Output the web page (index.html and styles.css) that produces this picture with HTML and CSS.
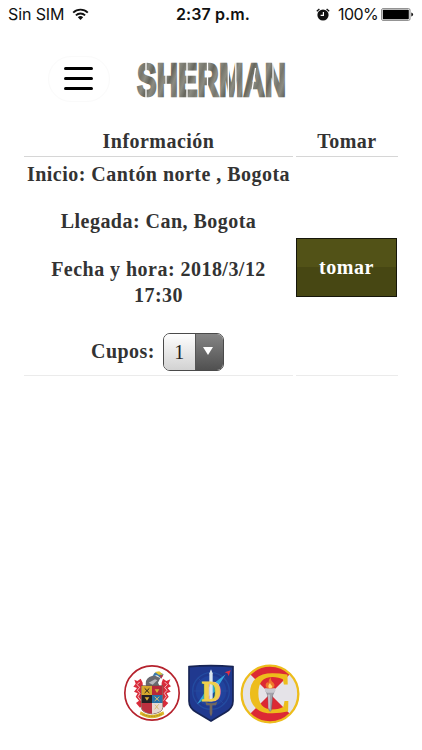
FILE: index.html
```html
<!DOCTYPE html>
<html lang="es">
<head>
    <meta charset="UTF-8">
    <meta name="viewport" content="width=device-width, initial-scale=1.0">
    <title>Sherman</title>
    <link rel="stylesheet" href="styles.css">
</head>
<body>
<div class="status-bar">
    <div class="status-left">
        <span>Sin SIM</span>
        <svg class="wifi" width="17" height="13" viewBox="0 0 17 13">
            <path d="M1.2 4.6a10.4 10.4 0 0 1 14.6 0M3.9 7.4a6.6 6.6 0 0 1 9.2 0" fill="none" stroke="#111" stroke-width="1.9"/>
            <path d="M5.8 9.3a3.9 3.9 0 0 1 5.4 0L8.5 12z" fill="#111"/>
        </svg>
    </div>
    <div class="status-time">2:37 p.m.</div>
    <div class="status-right">
        <svg class="alarm" width="14" height="13" viewBox="0 0 14 13">
            <circle cx="7" cy="7" r="5.6" fill="#111"/>
            <path d="M.8 3.3 3.4.9M13.2 3.3 10.6.9" stroke="#111" stroke-width="1.3"/>
            <path d="M7.4 3.9v3.5H4.6" fill="none" stroke="#fff" stroke-width="1.2"/>
        </svg>
        <span class="percent">100%</span>
        <svg class="battery" width="33" height="13" viewBox="0 0 33 13">
            <rect x=".6" y=".6" width="28.4" height="11.8" rx="1.4" fill="#fff" stroke="#888" stroke-width="1"/>
            <rect x="1.8" y="1.8" width="26" height="9.4" rx=".6" fill="#000"/>
            <path d="M30.3 4.4q1.8.4 1.8 2.1t-1.8 2.1z" fill="#111"/>
        </svg>
    </div>
</div>

<div class="header">
    <button class="menu-btn" aria-label="Menu">
        <span></span>
        <span></span>
        <span></span>
    </button>
    <svg class="logo" width="156" height="64" viewBox="0 -12 156 64">
        <defs>
            <linearGradient id="metal" x1="0" y1="0" x2="9" y2="3" gradientUnits="userSpaceOnUse" spreadMethod="reflect">
                <stop offset="0" stop-color="#66665d"/>
                <stop offset=".5" stop-color="#8c8c82"/>
                <stop offset="1" stop-color="#76766d"/>
            </linearGradient>
        </defs>
        <text class="logo-text" x="1" y="35.7" textLength="149" lengthAdjust="spacingAndGlyphs" fill="url(#metal)" stroke="url(#metal)">SHERMAN</text>
        <!-- stencil cuts -->
        <path d="M10 0V11M10 28V40M30 0V40M51 0V40M71.5 0V40M92.3 0V40M99.8 0V40M119.5 8 114.5 40M137 0V40" stroke="#fff" stroke-width="1.3"/>
    </svg>
</div>

<table class="trips">
    <thead>
        <tr>
            <th class="col-info">Información</th>
            <th class="col-take">Tomar</th>
        </tr>
    </thead>
    <tbody>
        <tr>
            <td>
                <p>Inicio: Cantón norte , Bogota</p>
                <p>Llegada: Can, Bogota</p>
                <p>Fecha y hora: 2018/3/12 17:30</p>
                <div class="seats">
                    <span>Cupos:</span>
                    <div class="select">
                        <span class="select-value">1</span>
                        <span class="select-arrow"></span>
                    </div>
                </div>
            </td>
            <td class="take"><button class="take-btn">tomar</button></td>
        </tr>
    </tbody>
</table>

<div class="footer">
    <svg class="crest" width="56" height="56" viewBox="26 29 168 168">
        <circle cx="110" cy="113" r="81.5" fill="#fff" stroke="#b5222d" stroke-width="5"/>
        <g fill="#d92c3b">
            <path d="M76 70 66 77 57 73 61 85 54 94 65 98 56 109 67 114 61 124 71 136 62 143 74 157 84 149 82 82z"/>
            <path d="M143 70 153 77 165 72 160 85 167 93 157 98 166 109 154 114 160 124 150 136 159 143 146 157 137 149 139 82z"/>
        </g>
        <path d="M73 80l-8 8 8 8-7 9 8 9-6 10 9 12M148 80l8 8-8 8 7 9-8 9 6 10-9 12" fill="none" stroke="#fff" stroke-width="2"/>
        <path d="M93 95Q87 73 102 65L116 60 135 68 128 82 134 95z" fill="#68696f"/>
        <path d="M100 82 119 72 126 75 112 88z" fill="#b8b8bd"/>
        <path d="M113 63Q115 48 130 50L145 57 137 69 125 60z" fill="#3c78a8"/>
        <path d="M119 50 132 48 143 58 130 58z" fill="#e5c532"/>
        <path d="M134 60 144 60 137 71z" fill="#bd3140"/>
        <path d="M78 91h64v66q0 15-32 19-32-4-32-19z" fill="#e9d8c6" stroke="#5c3b31" stroke-width="2"/>
        <path d="M79 92h31v27H79z" fill="#d5a72c"/>
        <path d="M110 92h31v27h-31z" fill="#b82739"/>
        <path d="M79 119h31v24H79z" fill="#252023"/>
        <path d="M110 119h31v24h-31z" fill="#2972a9"/>
        <path d="M79 143h31v32q-31-4-31-18z" fill="#bd3140"/>
        <path d="M110 143h31v13q0 15-31 19z" fill="#e6d9d3"/>
        <path d="M88 99 102 113M102 99 88 113" stroke="#29231b" stroke-width="3"/>
        <path d="M118 102h14l-7 11zM88 126h14l-7 10z" fill="#d8ad3a"/>
        <path d="M118 124 132 137M132 124 118 137M119 148l11 14M130 147l-12 15" stroke="#d8bb72" stroke-width="3"/>
        <path d="M76 168Q93 180 110 179T144 168L147 177Q128 189 110 189T73 177z" fill="#ddb72c"/>
        <path d="M82 177Q110 189 138 177" fill="none" stroke="#796018" stroke-width="2" stroke-dasharray="3 2"/>
    </svg>
    <svg class="crest" width="46" height="57" viewBox="24 29 138 171">
        <path d="M27 34Q93 28 159 34V137Q159 158 137 171L93 197 49 171Q27 158 27 137z" fill="#20398f" stroke="#172454" stroke-width="5"/>
        <circle cx="93" cy="107" r="55" fill="none" stroke="#234ba0" stroke-width="4"/>
        <circle cx="93" cy="107" r="46" fill="#21439d"/>
        <path d="M93 55V157M40 107H145M55 69 131 145" stroke="#2a509f" stroke-width="2"/>
        <path d="M51 147 83 98 137 57 104 110z" fill="#35a6df"/>
        <path d="M134 51 152 45 146 62 142 54z" fill="#e13043"/>
        <path d="M88 138V54L93 42 98 54V138z" fill="#dbe6ef"/>
        <path d="M76 139Q93 149 112 139L108 150H97V174L93 184 89 174V150H79z" fill="#73675e"/>
        <text class="crest-d" x="65" y="136" textLength="58" lengthAdjust="spacingAndGlyphs">D</text>
    </svg>
    <svg class="crest" width="60" height="60" viewBox="15 24 180 180">
        <circle cx="105" cy="114" r="86" fill="#e5e3e8"/>
        <path d="M105 114 44 53A86 86 0 0 1 166 53zM105 114 44 175A86 86 0 0 0 166 175z" fill="#dc2934"/>
        <circle cx="105" cy="114" r="85" fill="none" stroke="#edbd1c" stroke-width="7"/>
        <text class="crest-c" x="40" y="169" textLength="128" lengthAdjust="spacingAndGlyphs">C</text>
        <path d="M92 103h27l-6 15-4 45q-4 6-7 0l-4-45z" fill="#a4a3ab" stroke="#666470" stroke-width="1.5"/>
        <path d="M102 116v42" stroke="#e4e4e9" stroke-width="3"/>
        <path d="M90 97h31v8l-5 5H95l-5-5z" fill="#c9c8cf"/>
        <path d="M96 97Q87 87 97 78L100 82Q100 72 107 63 107 75 115 80 123 90 113 97z" fill="#ef782c"/>
        <path d="M102 97Q97 90 105 81 108 89 112 90 112 95 108 97z" fill="#ffe075"/>
    </svg>
</div>
</body>
</html>
```
FILE: styles.css
```css
* { box-sizing: border-box; }
body {
    margin: 0;
    height: 750px;
    display: flex;
    flex-direction: column;
    background: #fff;
    color: #333;
    font-family: "Liberation Serif", "Times New Roman", serif;
    overflow: hidden;
}

/* status bar */
.status-bar {
    height: 28px;
    padding: 0 8px;
    display: grid;
    grid-template-columns: 1fr auto 1fr;
    align-items: center;
    font-family: Inter, Roboto, sans-serif;
    font-size: 16px;
    color: #111;
}
.status-left { display: flex; align-items: center; gap: 8px; letter-spacing: -0.1px; }
.status-time { font-weight: 600; letter-spacing: 0.1px; padding-left: 4px; }
.status-right { display: flex; align-items: center; justify-content: flex-end; }
.percent { margin: 0 3px 0 8px; letter-spacing: -0.6px; }

/* header */
.header { height: 100px; padding: 0 0 0 48px; display: flex; align-items: center; }
.menu-btn {
    width: 62px;
    height: 46px;
    margin: 1px 26px 0 0;
    padding: 0 16px 0 15px;
    display: flex;
    flex-direction: column;
    justify-content: center;
    gap: 7px;
    background: #fff;
    border: 1px solid #fafafa;
    border-radius: 23px;
}
.menu-btn span { height: 3px; border-radius: 2px; background: #000; }
.logo { margin-top: 3px; overflow: visible; }
.logo-text { font-family: "Liberation Sans", Arial, sans-serif; font-weight: bold; font-size: 47px; stroke-width: 2.6px; }

/* trips table */
.trips {
    width: 380px;
    margin: 0 0 0 21px;
    table-layout: fixed;
    border-collapse: separate;
    border-spacing: 3px 0;
    font-size: 20px;
    font-weight: bold;
    line-height: 26.5px;
    letter-spacing: 0.47px;
    text-align: center;
}
.trips th { height: 28px; padding: 0 0 1px; border-bottom: 1px solid #d6d6d6; }
.trips td { padding: 4px 0; border-bottom: 1px solid #ebebeb; vertical-align: middle; }
.trips td.take { padding-top: 8px; }
.col-info { width: 269px; }
.trips p { margin: 0 0 21px; }
.seats { display: flex; justify-content: center; align-items: center; gap: 8px; margin-top: 24px; padding-right: 2px; }
.select {
    width: 61px;
    height: 38px;
    display: flex;
    border: 1px solid #4a4a4a;
    border-radius: 7px;
    overflow: hidden;
    font-weight: normal;
    color: #222;
}
.select-value {
    flex: 1;
    line-height: 36px;
    background: linear-gradient(#fefefe, #d2d2d2);
}
.select-arrow {
    width: 28px;
    padding: 0 2px 2px 0;
    display: flex;
    align-items: center;
    justify-content: center;
    background: linear-gradient(#858585, #505050);
    border-left: 1px solid #555;
}
.select-arrow::before {
    content: "";
    border: 5px solid transparent;
    border-top: 8px solid #fff;
    border-bottom: 0;
}
.take-btn {
    width: 101px;
    height: 59px;
    display: block;
    padding: 0;
    border: 1px solid #16160a;
    background: linear-gradient(#525217 50%, #474713 50%);
    color: #fff;
    font: inherit;
    letter-spacing: 0.6px;
}

/* crests */
.footer { margin-top: auto; height: 86px; padding-left: 124px; display: flex; align-items: flex-start; }
.crest { flex: none; overflow: visible; }
.crest:nth-child(1) { margin: 1px 8px 0 0; }
.crest:nth-child(2) { margin: 1px 6px 0 0; }
.crest-d { font-family: "Liberation Serif", serif; font-weight: bold; font-size: 86px; fill: #f1cf4d; stroke: #f1cf4d; stroke-width: 3px; }
.crest-c { font-family: "Liberation Serif", serif; font-size: 172px; fill: #edbd1c; stroke: #edbd1c; stroke-width: 5px; }
```
